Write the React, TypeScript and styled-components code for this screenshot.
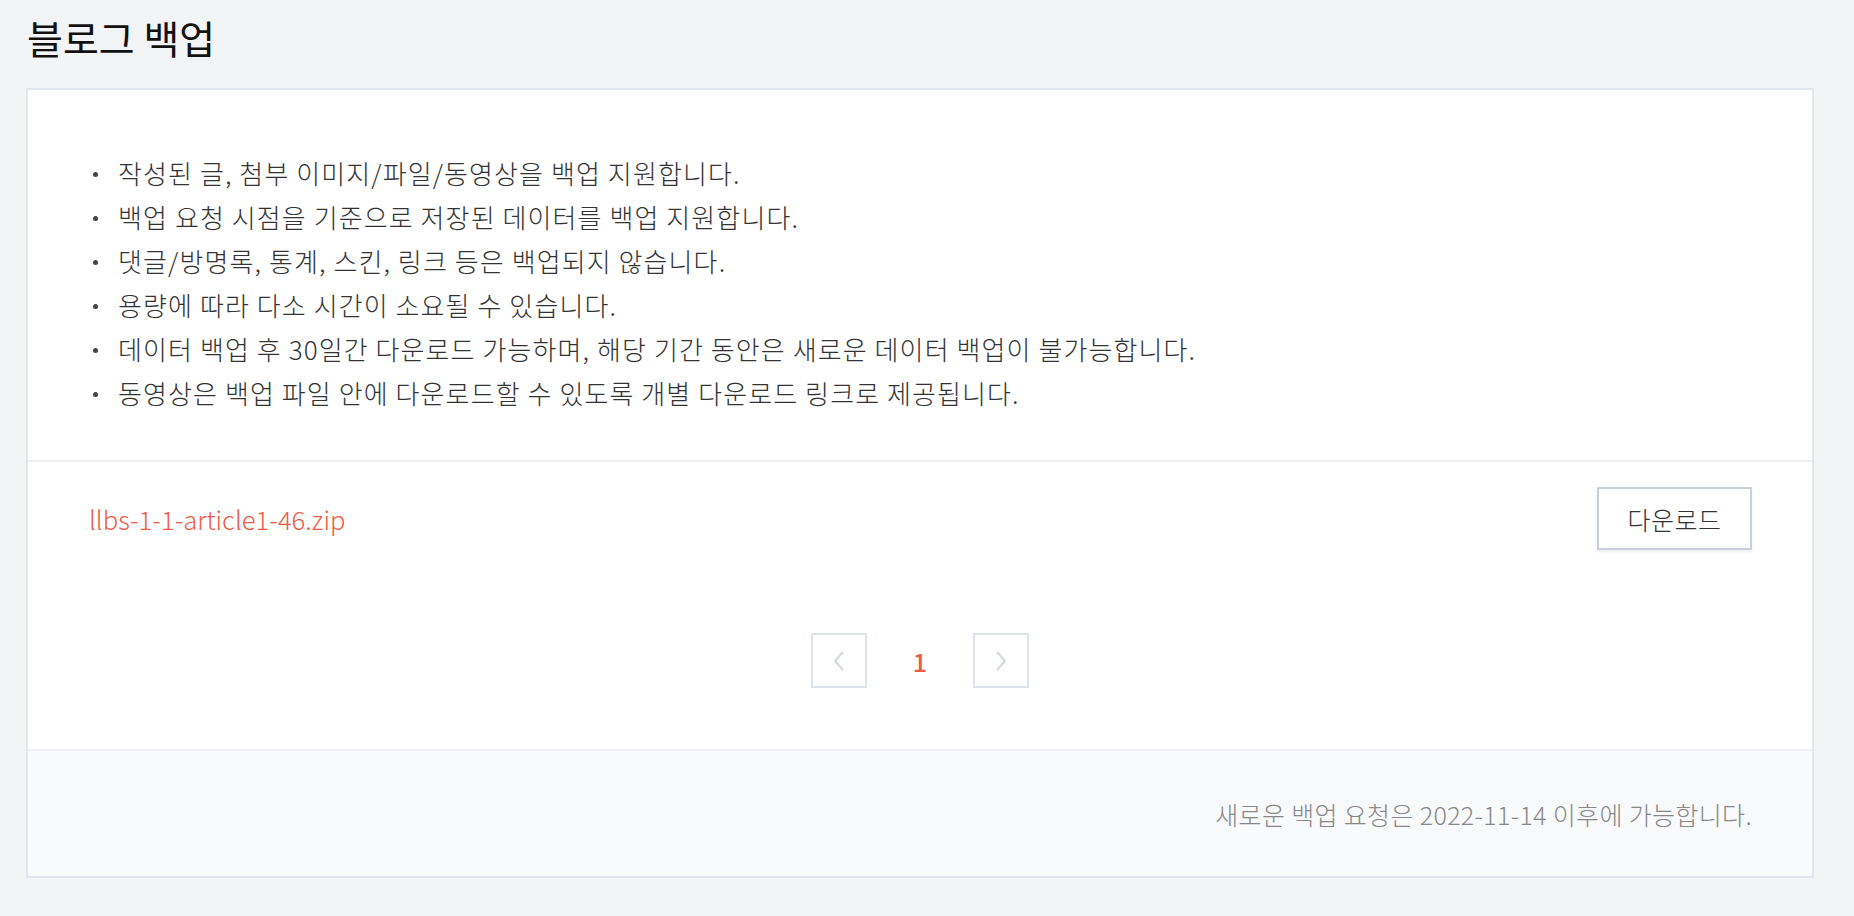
import React from "react";
import styled, { createGlobalStyle } from "styled-components";

const GlobalStyle = createGlobalStyle`
  html, body {
    margin: 0;
    padding: 0;
    background: #f3f4f6;
    font-family: "Noto Sans CJK KR", "Noto Sans", sans-serif;
  }
  * { box-sizing: border-box; }
`;

const Page = styled.div`
  padding: 19px 40px 39px 26px;
`;

const Title = styled.h1`
  margin: 0 0 32px 1px;
  font-size: 39px;
  line-height: 37px;
  font-weight: 400;
  color: #111;
`;

const Card = styled.div`
  background: #fff;
  border: 2px solid #e3e5ee;
`;

const NoticeList = styled.ul`
  list-style: none;
  margin: 0;
  padding: 61px 60px 45px 60px;
  border-bottom: 2px solid #eff0f4;
`;

const NoticeItem = styled.li`
  position: relative;
  padding-left: 30px;
  font-size: 26px;
  font-weight: 300;
  line-height: 44px;
  color: #333;
  letter-spacing: 1.1px;

  &::before {
    content: "";
    position: absolute;
    left: 5px;
    top: 21px;
    width: 5px;
    height: 5px;
    border-radius: 50%;
    background: #444;
  }
`;

const FileRow = styled.div`
  display: flex;
  align-items: center;
  justify-content: space-between;
  padding: 25px 60px 25px 61px;
`;

const FileName = styled.a`
  font-size: 25.7px;
  font-weight: 300;
  color: #ef5a45;
  text-decoration: none;
`;

const DownloadButton = styled.button`
  width: 155px;
  height: 63px;
  background: #fff;
  border: 2px solid #c9d0dc;
  box-shadow: 0 2px 2px rgba(0, 0, 0, 0.06);
  font-family: inherit;
  font-size: 25px;
  font-weight: 300;
  letter-spacing: 0.5px;
  color: #333;
  cursor: pointer;
`;

const Pagination = styled.div`
  display: flex;
  justify-content: center;
  align-items: center;
  padding: 58px 0 61px;
`;

const PageArrow = styled.button`
  width: 56px;
  height: 55px;
  display: flex;
  align-items: center;
  justify-content: center;
  background: #fff;
  border: 2px solid #dfe3ec;
  padding: 0;
`;

const PageNumber = styled.span`
  width: 106px;
  text-align: center;
  font-size: 25px;
  color: #ef5a45;
  font-weight: 500;
`;

const Footer = styled.div`
  background: #f9fafc;
  border-top: 2px solid #eef0f4;
  height: 127px;
  display: flex;
  align-items: center;
  justify-content: flex-end;
  padding: 0 60px 0 60px;
  font-size: 25px;
  font-weight: 300;
  color: #888;
  letter-spacing: 0.35px;
`;

const Chevron = ({ dir }: { dir: "left" | "right" }) => (
  <svg width="14" height="24" viewBox="0 0 14 24" fill="none">
    <path
      d={dir === "left" ? "M11 3 L3 12 L11 21" : "M3 3 L11 12 L3 21"}
      stroke="#d3d8e1"
      strokeWidth="2"
      fill="none"
    />
  </svg>
);

const notices = [
  "작성된 글, 첨부 이미지/파일/동영상을 백업 지원합니다.",
  "백업 요청 시점을 기준으로 저장된 데이터를 백업 지원합니다.",
  "댓글/방명록, 통계, 스킨, 링크 등은 백업되지 않습니다.",
  "용량에 따라 다소 시간이 소요될 수 있습니다.",
  "데이터 백업 후 30일간 다운로드 가능하며, 해당 기간 동안은 새로운 데이터 백업이 불가능합니다.",
  "동영상은 백업 파일 안에 다운로드할 수 있도록 개별 다운로드 링크로 제공됩니다.",
];

export default function App() {
  return (
    <>
      <GlobalStyle />
      <Page>
        <Title>블로그 백업</Title>
        <Card>
          <NoticeList>
            {notices.map((n) => (
              <NoticeItem key={n}>{n}</NoticeItem>
            ))}
          </NoticeList>
          <FileRow>
            <FileName href="#">llbs-1-1-article1-46.zip</FileName>
            <DownloadButton>다운로드</DownloadButton>
          </FileRow>
          <Pagination>
            <PageArrow aria-label="이전">
              <Chevron dir="left" />
            </PageArrow>
            <PageNumber>1</PageNumber>
            <PageArrow aria-label="다음">
              <Chevron dir="right" />
            </PageArrow>
          </Pagination>
          <Footer>새로운 백업 요청은 2022-11-14 이후에 가능합니다.</Footer>
        </Card>
      </Page>
    </>
  );
}
